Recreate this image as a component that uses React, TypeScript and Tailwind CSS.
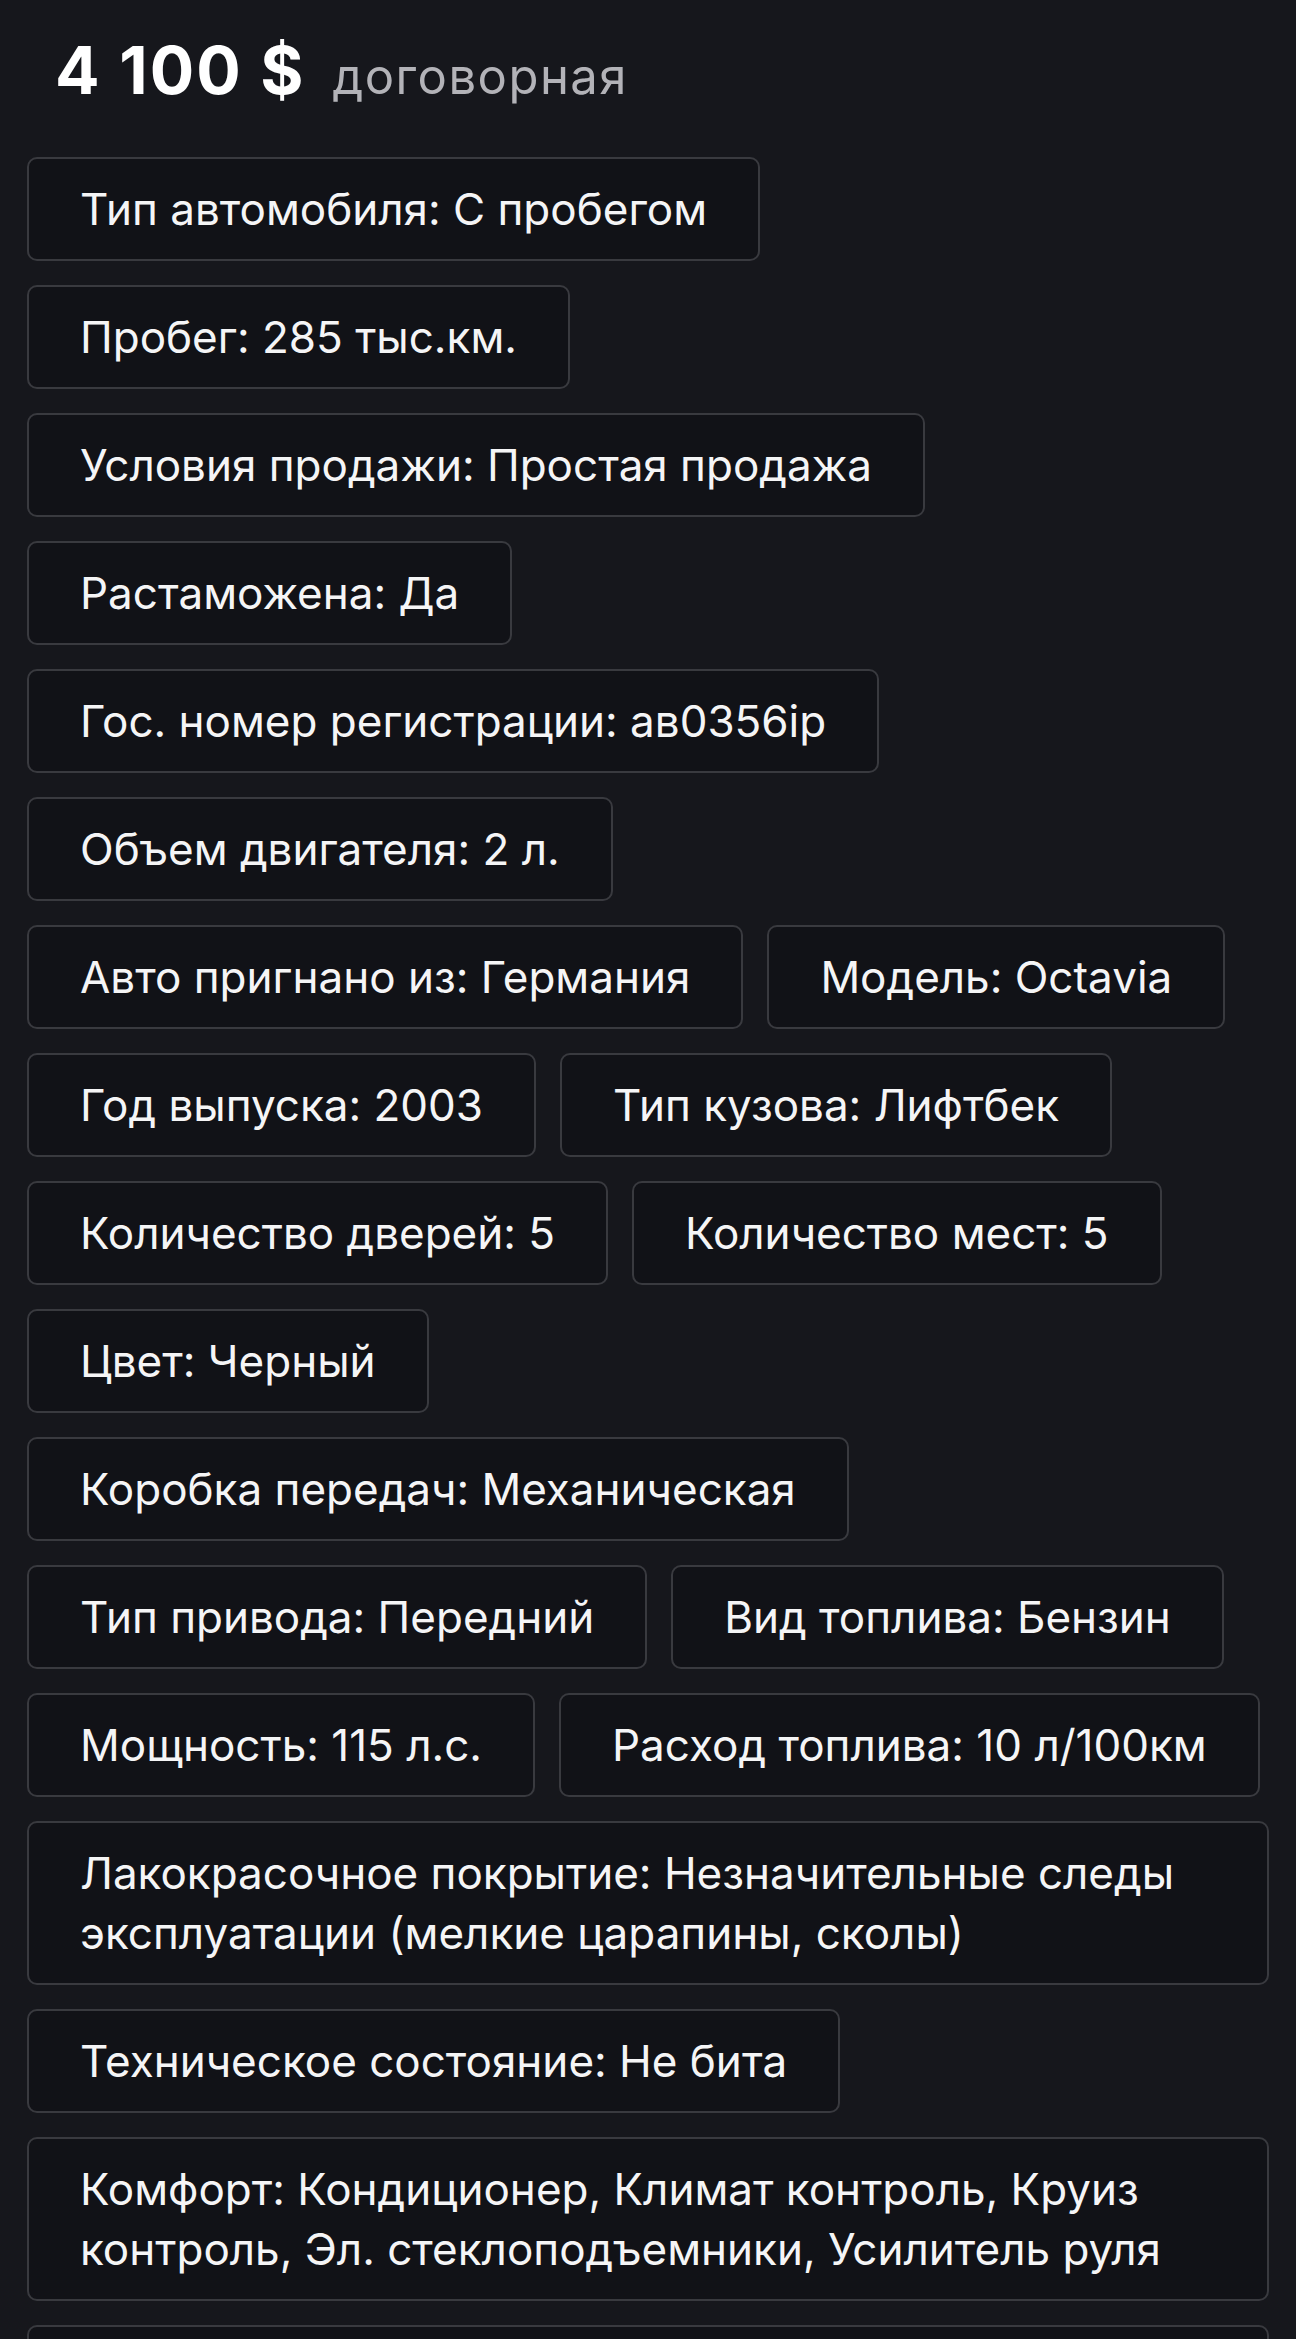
import React from 'react';

const specs: string[] = [
  'Тип автомобиля: С пробегом',
  'Пробег: 285 тыс.км.',
  'Условия продажи: Простая продажа',
  'Растаможена: Да',
  'Гос. номер регистрации: ав0356ір',
  'Объем двигателя: 2 л.',
  'Авто пригнано из: Германия',
  'Модель: Octavia',
  'Год выпуска: 2003',
  'Тип кузова: Лифтбек',
  'Количество дверей: 5',
  'Количество мест: 5',
  'Цвет: Черный',
  'Коробка передач: Механическая',
  'Тип привода: Передний',
  'Вид топлива: Бензин',
  'Мощность: 115 л.с.',
  'Расход топлива: 10 л/100км',
  'Лакокрасочное покрытие: Незначительные следы эксплуатации (мелкие царапины, сколы)',
  'Техническое состояние: Не бита',
  'Комфорт: Кондиционер, Климат контроль, Круиз контроль, Эл. стеклоподъемники, Усилитель руля',
  'Безопасность: ABS, ESP, Подушки безопасности, Сигнализация, Иммобилайзер',
];

function SpecChip({ text }: { text: string }) {
  return (
    <div className="rounded-[10px] border-2 border-[#393a3f] bg-[#111217] px-[51px] py-[20px] text-[44px] leading-[60px] text-[#f5f5f6]">
      {text}
    </div>
  );
}

export default function App() {
  return (
    <div
      className="min-h-screen bg-[#16171c] px-[27px]"
      style={{ fontFamily: 'Inter, "Noto Sans", sans-serif' }}
    >
      <div className="flex items-baseline gap-[27px] pl-[28px] pt-[37px]">
        <span className="text-[66px] font-bold leading-none tracking-[0.03em] text-white">4 100 $</span>
        <span className="text-[49px] leading-none tracking-[0.03em] text-[#b3b3b8]">договорная</span>
      </div>

      <div className="mt-[54px] flex flex-wrap gap-6">
        {specs.map((s) => (
          <SpecChip key={s} text={s} />
        ))}
      </div>
    </div>
  );
}
